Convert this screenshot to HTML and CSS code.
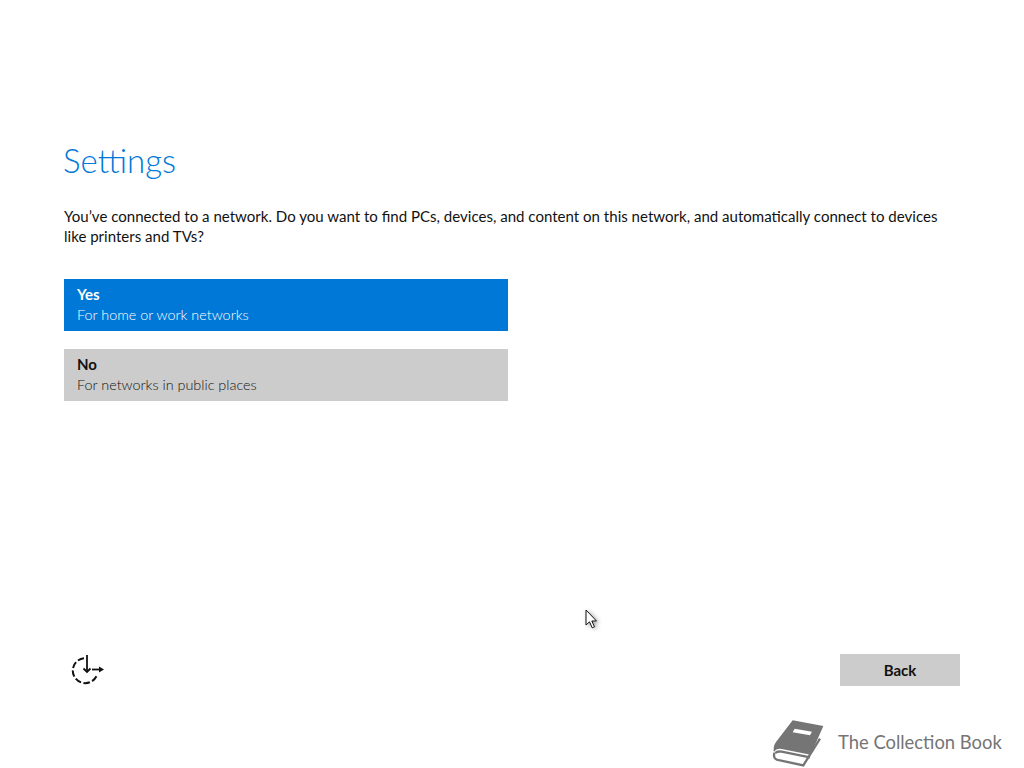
FILE: index.html
```html
<!DOCTYPE html>
<html lang="en">
<head>
<meta charset="utf-8">
<title>Settings</title>
<link rel="stylesheet" href="styles.css">
</head>
<body>
<main class="page">
  <section class="content">
    <h1 class="title">Settings</h1>
    <p class="intro">You’ve connected to a network. Do you want to find PCs, devices, and content on this network, and automatically connect to devices like printers and TVs?</p>
    <div class="options">
      <button class="option option-yes"><b>Yes</b><span>For home or work networks</span></button>
      <button class="option option-no"><b>No</b><span>For networks in public places</span></button>
    </div>
  </section>
  <footer class="actions">
    <svg class="ease" width="34" height="32" viewBox="0 0 34 32" fill="none" stroke="#111" stroke-width="2">
      <path d="M13 4.200A12.500 12.500 0 1 0 26.300 20" stroke-dasharray="6.500 2.500"/>
      <path d="M16 1v17" stroke-width="1.800"/>
      <path d="M12.500 14.500 16 18l3.500-3.500" stroke-width="1.800"/>
      <path d="M21 15.500h8" stroke-width="1.800"/>
      <path d="M28 12.500 33 15.500 28 18.500z" fill="#111" stroke="none"/>
    </svg>
    <button class="back">Back</button>
  </footer>
</main>
<svg class="cursor" width="14" height="20" viewBox="0 0 14 20"><path d="M1 1v15l3.500-3.200 2.700 6 2.300-1-2.700-5.800h4.700z" fill="#fff" stroke="#111"/></svg>
<div class="brand">
  <svg class="brand-icon" width="55" height="50" viewBox="30 20 165 150">
    <path d="M98 30 190 47 152 133 65 116Q50 113 42 125 38 110 48 95Z" fill="#757575"/>
    <path d="M43 127Q38 150 60 150L130 165 180 85M46 128Q52 122 65 124L150 141" fill="none" stroke="#757575" stroke-width="7"/>
    <path d="M104 55 156 64 150 75 98 66Z" fill="#fff"/>
  </svg>
  <span>The Collection Book</span>
</div>
</body>
</html>
```
FILE: styles.css
```css
html, body { margin: 0; height: 100%; background: #fff; overflow: hidden; }
body { position: relative; font-family: "Lato", "Noto Sans", sans-serif; color: #111; }
.page { box-sizing: border-box; height: 768px; padding: 138px 64px 0; display: flex; flex-direction: column; }
.content { flex: 1; }
.title { margin: 0 0 24px -1px; font-size: 33px; line-height: 44px; font-weight: 300; color: #0078d7; }
.intro { margin: 0 0 33px; width: 890px; font-size: 15.05px; line-height: 20px; }
.options { display: flex; flex-direction: column; gap: 18px; width: 444px; }
.option { display: flex; flex-direction: column; height: 52px; padding: 5px 13px; border: 0; font: inherit; font-size: 15px; line-height: 20px; text-align: left; }
.option b { font-weight: 700; line-height: 21px; }
.option span { font-size: 14.4px; font-weight: 300; }
.option-yes { background: #0078d7; color: #fff; }
.option-no { background: #ccc; color: #111; }
.actions { display: flex; justify-content: space-between; align-items: center; height: 32px; margin-bottom: 82px; }
.ease { margin-left: 7px; }
.back { width: 120px; height: 32px; border: 0; background: #ccc; font: inherit; font-size: 15px; font-weight: 700; color: #111; }
.cursor { position: absolute; left: 585px; top: 609px; filter: drop-shadow(2px 1px 2px rgba(0,0,0,.35)); }
.brand { position: absolute; left: 770px; top: 717px; display: flex; align-items: center; gap: 13px; color: #757575; font-size: 18.4px; }
```
